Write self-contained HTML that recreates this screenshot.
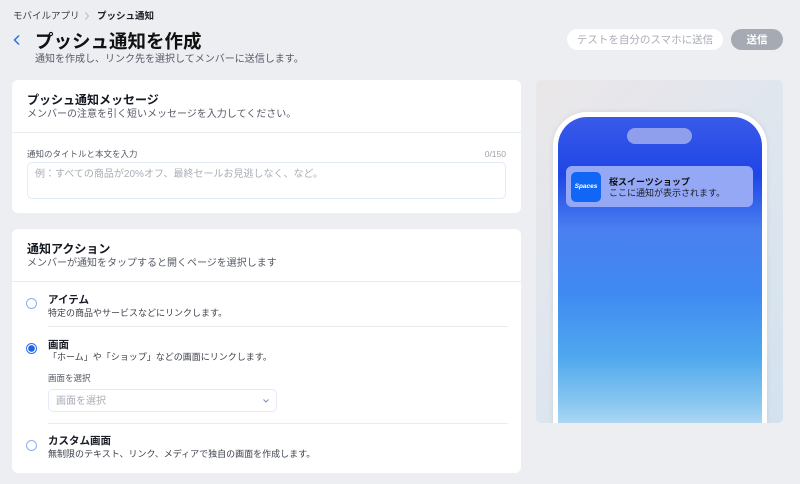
<!DOCTYPE html>
<html><head><meta charset="utf-8"><style>
*{margin:0;padding:0;box-sizing:border-box}
body{width:800px;height:484px;background:#eceef2;font-family:"Liberation Sans","Noto Sans CJK JP",sans-serif;color:#1a1d26;position:relative;overflow:hidden}
.a{position:absolute;white-space:nowrap;line-height:1.45}
.card{position:absolute;background:#fff;border-radius:6px}
.t{font-size:12px;font-weight:bold;color:#141821}
.s{font-size:10px;color:#555a66}
.hr{position:absolute;height:1px;background:#e8ebf0}
.radio{position:absolute;width:11px;height:11px;border:1.2px solid #8ab0f5;border-radius:50%;background:#fff}
</style></head><body>
<div class="a" style="left:13px;top:10px;font-size:9.5px;color:#3c404a">モバイルアプリ</div>
<svg class="a" style="left:84px;top:11px" width="6" height="10"><path d="M1.5 1.5L4.5 5 1.5 8.5" fill="none" stroke="#b8bcc5" stroke-width="1"/></svg>
<div class="a" style="left:97px;top:10px;font-size:9.5px;font-weight:bold">プッシュ通知</div>
<svg class="a" style="left:12px;top:34px" width="9" height="12"><path d="M7 1.5L2.5 6 7 10.5" fill="none" stroke="#2e6fe8" stroke-width="1.5"/></svg>
<div class="a" style="left:35px;top:29px;font-size:18.5px;font-weight:bold;color:#111">プッシュ通知を作成</div>
<div class="a" style="left:35px;top:53px;font-size:10px;color:#555a66">通知を作成し、リンク先を選択してメンバーに送信します。</div>
<div class="a" style="left:567px;top:29px;width:156px;height:21px;background:#fff;border-radius:11px;font-size:10.5px;color:#a9adb6;text-align:center;line-height:22px">テストを自分のスマホに送信</div>
<div class="a" style="left:731px;top:29px;width:52px;height:21px;background:#a6aab3;border-radius:11px;font-size:10.5px;color:#fff;font-weight:bold;text-align:center;line-height:22px">送信</div>

<div class="card" style="left:12px;top:80px;width:509px;height:133px">
<div class="a t" style="left:15px;top:12px">プッシュ通知メッセージ</div>
<div class="a s" style="left:15px;top:28px">メンバーの注意を引く短いメッセージを入力してください。</div>
<div class="hr" style="left:0;right:0;top:52px"></div>
<div class="a" style="left:15px;top:68px;font-size:8.5px;color:#555a66">通知のタイトルと本文を入力</div>
<div class="a" style="right:15px;top:68px;font-size:8.5px;color:#9ea2ab">0/150</div>
<div class="a" style="left:15px;top:82px;width:479px;height:37px;border:1px solid #e3eaf8;border-radius:5px"></div>
<div class="a" style="left:23px;top:88px;font-size:10px;color:#a9adb6">例：すべての商品が20%オフ、最終セールお見逃しなく、など。</div>
</div>

<div class="card" style="left:12px;top:229px;width:509px;height:244px">
<div class="a t" style="left:15px;top:12px">通知アクション</div>
<div class="a s" style="left:15px;top:28px">メンバーが通知をタップすると開くページを選択します</div>
<div class="hr" style="left:0;right:0;top:52px"></div>
<div class="radio" style="left:14px;top:69px"></div>
<div class="a" style="left:36px;top:64px;font-size:10.5px;font-weight:bold">アイテム</div>
<div class="a" style="left:36px;top:78px;font-size:9px;color:#3c404a">特定の商品やサービスなどにリンクします。</div>
<div class="hr" style="left:36px;width:460px;top:97px"></div>
<div class="radio" style="left:14px;top:114px;border-color:#2e6fe8;background:radial-gradient(circle,#1a63ee 3px,#fff 3.6px)"></div>
<div class="a" style="left:36px;top:109px;font-size:10.5px;font-weight:bold">画面</div>
<div class="a" style="left:36px;top:122px;font-size:9px;color:#3c404a">「ホーム」や「ショップ」などの画面にリンクします。</div>
<div class="a" style="left:36px;top:143px;font-size:8.5px;color:#555a66">画面を選択</div>
<div class="a" style="left:36px;top:160px;width:229px;height:23px;border:1px solid #e3eaf8;border-radius:5px"></div>
<div class="a" style="left:44px;top:166px;font-size:10px;color:#a9adb6">画面を選択</div>
<svg class="a" style="left:250px;top:169px" width="8" height="6"><path d="M1.5 1.5L4 4 6.5 1.5" fill="none" stroke="#7a8fc0" stroke-width="1"/></svg>
<div class="hr" style="left:36px;width:460px;top:194px"></div>
<div class="radio" style="left:14px;top:211px"></div>
<div class="a" style="left:36px;top:205px;font-size:10.5px;font-weight:bold">カスタム画面</div>
<div class="a" style="left:36px;top:219px;font-size:9px;color:#3c404a">無制限のテキスト、リンク、メディアで独自の画面を作成します。</div>
</div>

<div class="a" style="left:536px;top:80px;width:247px;height:343px;border-radius:5px;overflow:hidden;background:linear-gradient(135deg,#ebe7e8,#e1e6ee 40%,#d3e2ef)">
<div class="a" style="left:17px;top:32px;width:214px;height:330px;background:#fff;border-radius:34px 34px 0 0;box-shadow:0 0 6px rgba(0,0,0,.08)"></div>
<div class="a" style="left:22px;top:37px;width:204px;height:320px;border-radius:29px 29px 0 0;background:linear-gradient(180deg,#3a5ae8 0%,#1e45e6 18%,#4a7ff0 35%,#3f8af2 55%,#4fa8ee 75%,#8cc8f0 90%,#c5e2f4 100%)"></div>
<div class="a" style="left:91px;top:48px;width:65px;height:16px;border-radius:8px;background:#8f9fee"></div>
<div class="a" style="left:30px;top:86px;width:187px;height:41px;border-radius:6px;background:#94a8f5"></div>
<div class="a" style="left:35px;top:92px;width:30px;height:30px;border-radius:5px;background:#1167f5;color:#fff;font-size:6.5px;font-weight:bold;font-style:italic;text-align:center;line-height:30px">Spaces</div>
<div class="a" style="left:73px;top:96px;font-size:9px;font-weight:bold;color:#111">桜スイーツショップ</div>
<div class="a" style="left:73px;top:107px;font-size:9px;color:#1a1d26">ここに通知が表示されます。</div>
</div>
</body></html>
